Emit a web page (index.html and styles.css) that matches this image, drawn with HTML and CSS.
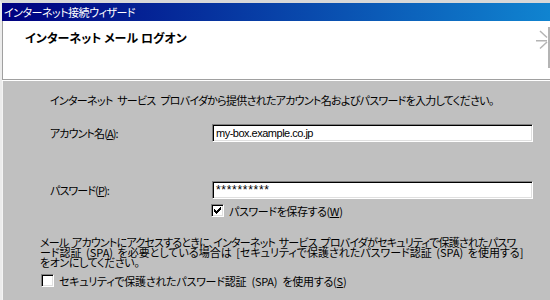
FILE: index.html
```html
<!DOCTYPE html>
<html lang="ja">
<head>
<meta charset="utf-8">
<link rel="stylesheet" href="styles.css">
</head>
<body>
<div class="window">
  <div class="titlebar">インターネット接続ウィザード</div>
  <div class="header">
    <div class="header-title">インターネット メール ログオン</div>
    <svg class="header-art" width="14" height="41" viewBox="0 0 14 41">
      <rect x="12" y="0" width="2" height="41" fill="#b4b4b4"/>
      <rect x="0" y="13" width="11" height="1.5" fill="#b4b4b4"/>
      <line x1="4" y1="4" x2="11" y2="10.5" stroke="#b4b4b4" stroke-width="1.5"/>
      <line x1="4" y1="21.5" x2="11" y2="15" stroke="#b4b4b4" stroke-width="1.5"/>
    </svg>
  </div>
  <div class="sep"></div>
  <div class="content">
    <p class="intro">インターネット サービス プロバイダから提供されたアカウント名およびパスワードを入力してください。</p>
    <div class="row account">
      <span class="label">アカウント名(<u>A</u>):</span>
      <div class="field">my-box.example.co.jp</div>
    </div>
    <div class="row password">
      <span class="label">パスワード(<u>P</u>):</span>
      <div class="field pw">**********</div>
    </div>
    <div class="check save">
      <span class="cb"><svg width="13" height="13" viewBox="0 0 13 13" shape-rendering="crispEdges"><path d="M9 3h1v1h-1z M8 4h2v1h-2z M3 5h1v1h-1z M7 5h3v1h-3z M3 6h2v1h-2z M6 6h3v1h-3z M3 7h5v1h-5z M4 8h3v1h-3z M5 9h1v1h-1z" fill="#000"/></svg></span>
      <span class="cb-label">パスワードを保存する(<u>W</u>)</span>
    </div>
    <p class="note"><span class="l1">メール アカウントにアクセスするときに、インターネット サービス プロバイダがセキュリティで保護されたパスワ</span><br><span class="l2">ード認証 (SPA) を必要としている場合は [セキュリティで保護されたパスワード認証 (SPA) を使用する]</span><br><span class="l3">をオンにしてください。</span></p>
    <div class="check spa">
      <span class="cb"></span>
      <span class="cb-label">セキュリティで保護されたパスワード認証 (SPA) を使用する(<u>S</u>)</span>
    </div>
  </div>
</div>
</body>
</html>
```

FILE: styles.css
```css
html, body {
  margin: 0;
  padding: 0;
}

body {
  width: 550px;
  height: 300px;
  overflow: hidden;
  background: #c0c0c0;
  font-family: "Noto Sans CJK JP", sans-serif;
  font-size: 11px;
  letter-spacing: -0.4px;
  font-feature-settings: "palt";
  color: #000;
}

.window {
  height: 300px;
  box-sizing: border-box;
  border-top: 3px solid #d8d8d8;
  border-left: 2px solid #ececec;
  display: flex;
  flex-direction: column;
}

.titlebar {
  height: 18px;
  line-height: 18px;
  padding-left: 2px;
  color: #fff;
  white-space: nowrap;
  letter-spacing: -0.5px;
  background: linear-gradient(to right, #000080, #1084d0);
}

.header {
  height: 58px;
  background: #fff;
  border-left: 1px solid #a0a0a0;
  display: flex;
  justify-content: space-between;
  align-items: flex-start;
}

.header-title {
  margin: 10px 0 0 22px;
  font-size: 12px;
  letter-spacing: 0;
  font-weight: 700;
  line-height: 14px;
  white-space: nowrap;
}

.header-art {
  margin-top: 6px;
  display: block;
}

.sep {
  height: 1px;
  background: #a0a0a0;
  border-bottom: 1px solid #fff;
}

.content {
  flex: 1;
  border-left: 1px solid #f4f4f4;
}

.intro {
  margin: 12px 0 0 47px;
  line-height: 14px;
  letter-spacing: -0.72px;
  word-spacing: 3px;
  white-space: nowrap;
}

.row {
  display: flex;
  align-items: center;
  margin-left: 47px;
  height: 18px;
}

.account {
  margin-top: 17px;
}

.password {
  margin-top: 39px;
}

.label {
  width: 162px;
  white-space: nowrap;
  letter-spacing: -0.9px;
}

.field {
  width: 321px;
  height: 18px;
  box-sizing: border-box;
  background: #fff;
  border: 1px solid;
  border-color: #808080 #fff #fff #808080;
  box-shadow: inset 1px 1px #000, inset -1px -1px #dfdfdf;
  padding-left: 3px;
  font-family: "Liberation Sans", Arial, sans-serif;
  font-size: 11px;
  line-height: 16px;
  letter-spacing: -0.5px;
  white-space: nowrap;
}

.field.pw {
  font-size: 12px;
  letter-spacing: 0.7px;
}

.check {
  display: flex;
  align-items: center;
  height: 13px;
  gap: 5px;
}

.save {
  margin: 5px 0 0 208px;
}

.spa {
  margin: 7px 0 0 38px;
}

.spa .cb-label {
  word-spacing: 3px;
  letter-spacing: -0.25px;
}

.cb {
  width: 13px;
  height: 13px;
  flex: none;
  box-sizing: border-box;
  background: #fff;
  border: 1px solid;
  border-color: #808080 #fff #fff #808080;
  box-shadow: inset 1px 1px #000, inset -1px -1px #dfdfdf;
  position: relative;
}

.cb svg {
  position: absolute;
  left: -1px;
  top: -1px;
}

.cb-label {
  white-space: nowrap;
  line-height: 14px;
}

.note {
  margin: 20px 0 0 37px;
  line-height: 10px;
  white-space: nowrap;
  word-spacing: 2px;
}

.note .l1 {
  letter-spacing: -0.8px;
}

.note .l2 {
  letter-spacing: 0;
}
```
